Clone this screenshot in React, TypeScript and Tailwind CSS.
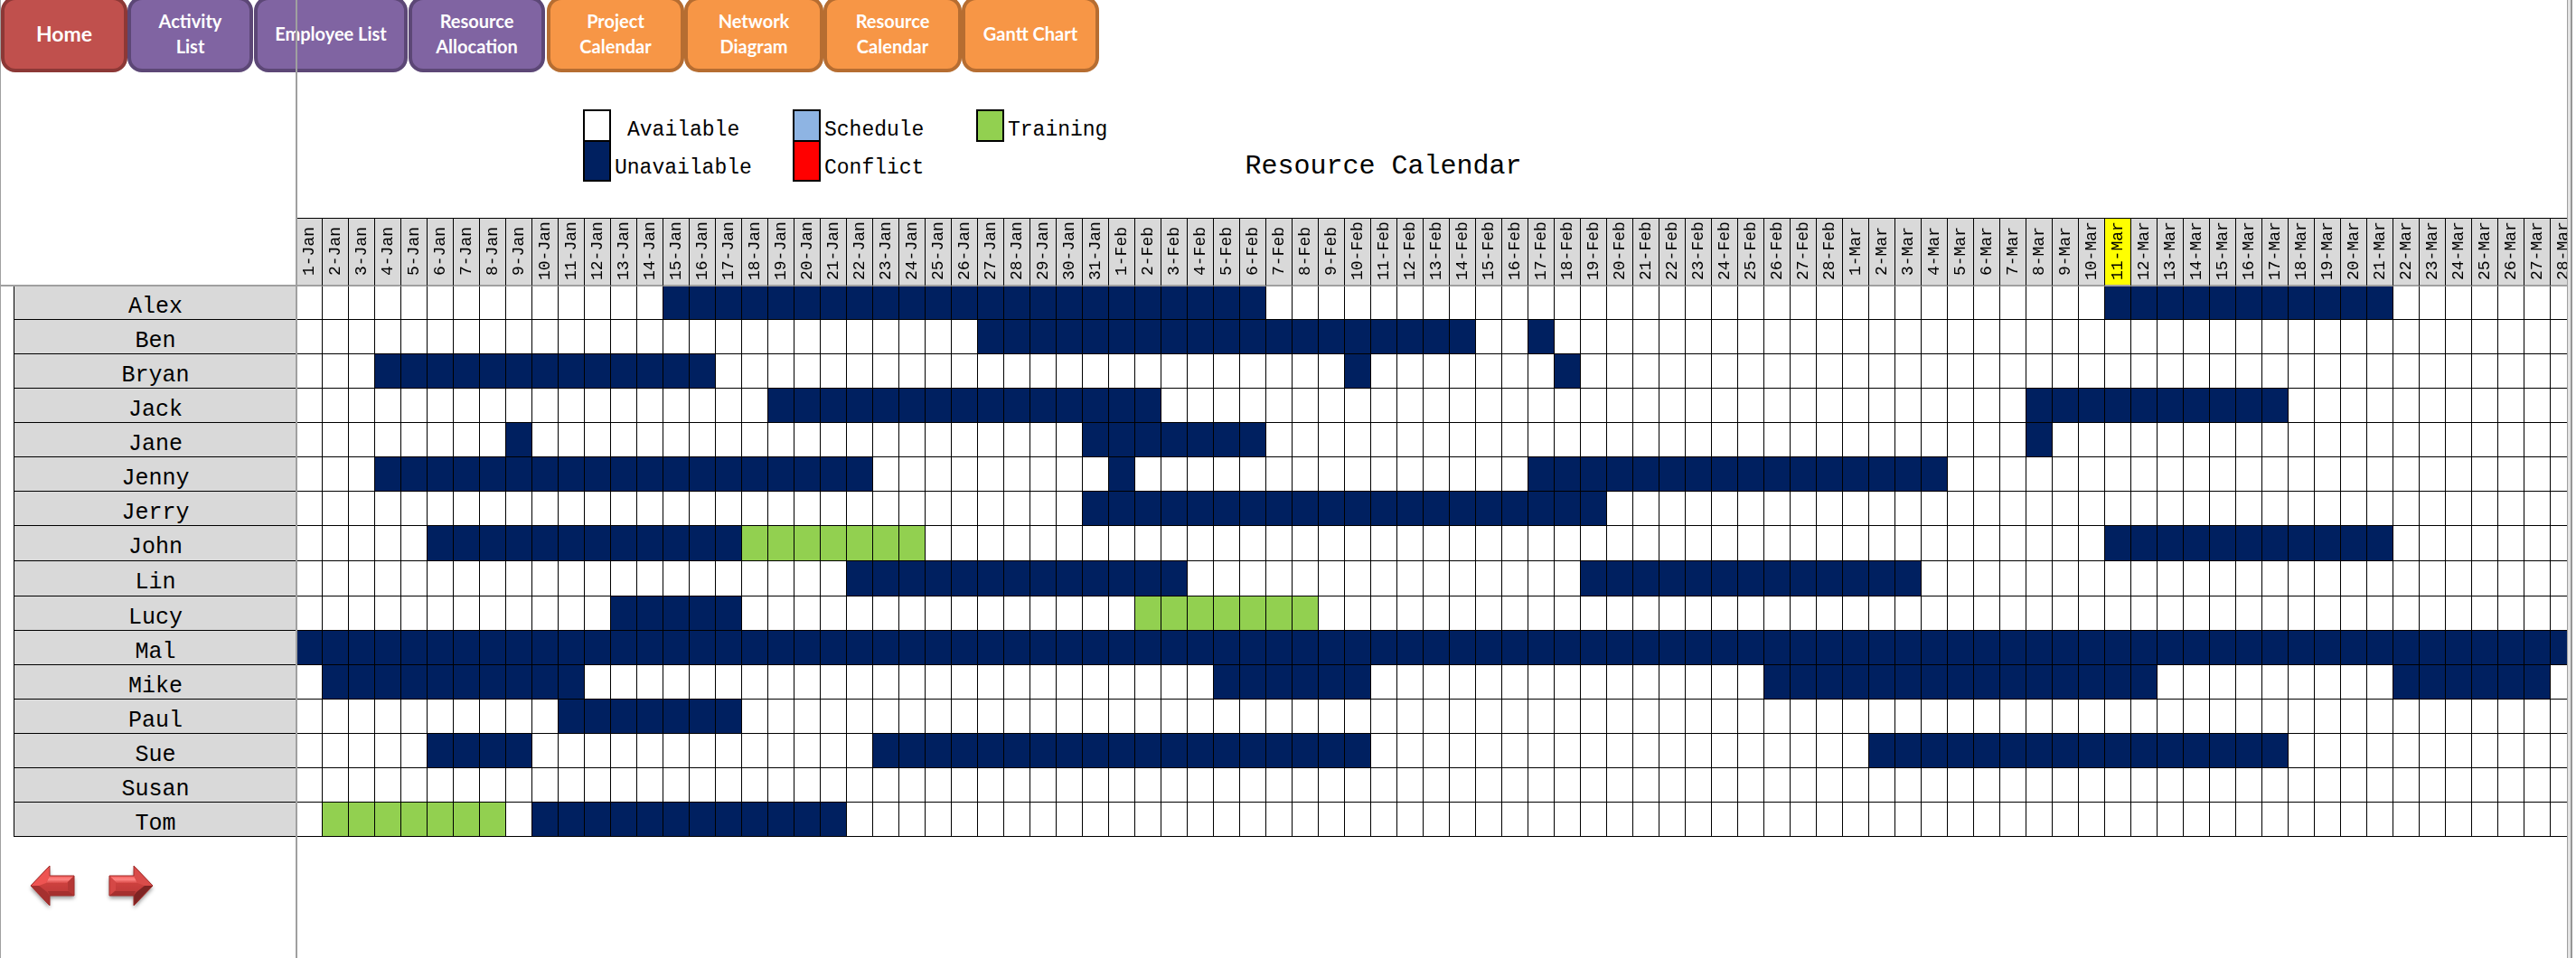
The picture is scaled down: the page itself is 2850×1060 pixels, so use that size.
const nav = [
  { label: ['Home'], w: 'w-[140px]', tone: 'bg-[#c0504d] border-[#8c3836]', size: 'text-[23px]' },
  { label: ['Activity', 'List'], w: 'w-[139px]', tone: 'bg-[#8064a2] border-[#5c4776]', size: 'text-[20px]' },
  { label: ['Employee List'], w: 'w-[170px] ml-px', tone: 'bg-[#8064a2] border-[#5c4776]', size: 'text-[20px]' },
  { label: ['Resource', 'Allocation'], w: 'w-[151px] ml-px', tone: 'bg-[#8064a2] border-[#5c4776]', size: 'text-[20px]' },
  { label: ['Project', 'Calendar'], w: 'w-[152px] ml-0.5', tone: 'bg-[#f79646] border-[#b66d31]', size: 'text-[20px]' },
  { label: ['Network', 'Diagram'], w: 'w-[154px]', tone: 'bg-[#f79646] border-[#b66d31]', size: 'text-[20px]' },
  { label: ['Resource', 'Calendar'], w: 'w-[153px]', tone: 'bg-[#f79646] border-[#b66d31]', size: 'text-[20px]' },
  { label: ['Gantt Chart'], w: 'w-[152px]', tone: 'bg-[#f79646] border-[#b66d31]', size: 'text-[20px]' },
];

const months: [string, number][] = [['Jan', 31], ['Feb', 28], ['Mar', 28]];
const days = months.flatMap(([m, n]) => Array.from({ length: n }, (_, i) => `${i + 1}-${m}`));
const today = '11-Mar';

type Span = [string, string, 'u' | 't'];
const people: { name: string; h?: string; spans: Span[] }[] = [
  { name: 'Alex', h: 'h-[37px]', spans: [['15-Jan', '6-Feb', 'u'], ['11-Mar', '21-Mar', 'u']] },
  { name: 'Ben', spans: [['27-Jan', '14-Feb', 'u'], ['17-Feb', '17-Feb', 'u']] },
  { name: 'Bryan', spans: [['4-Jan', '16-Jan', 'u'], ['10-Feb', '10-Feb', 'u'], ['18-Feb', '18-Feb', 'u']] },
  { name: 'Jack', spans: [['19-Jan', '2-Feb', 'u'], ['8-Mar', '17-Mar', 'u']] },
  { name: 'Jane', spans: [['9-Jan', '9-Jan', 'u'], ['31-Jan', '6-Feb', 'u'], ['8-Mar', '8-Mar', 'u']] },
  { name: 'Jenny', spans: [['4-Jan', '22-Jan', 'u'], ['1-Feb', '1-Feb', 'u'], ['17-Feb', '4-Mar', 'u']] },
  { name: 'Jerry', spans: [['31-Jan', '19-Feb', 'u']] },
  { name: 'John', h: 'h-[39px]', spans: [['6-Jan', '17-Jan', 'u'], ['18-Jan', '24-Jan', 't'], ['11-Mar', '21-Mar', 'u']] },
  { name: 'Lin', h: 'h-[39px]', spans: [['22-Jan', '3-Feb', 'u'], ['19-Feb', '3-Mar', 'u']] },
  { name: 'Lucy', spans: [['13-Jan', '17-Jan', 'u'], ['2-Feb', '8-Feb', 't']] },
  { name: 'Mal', spans: [['1-Jan', '28-Mar', 'u']] },
  { name: 'Mike', spans: [['2-Jan', '11-Jan', 'u'], ['5-Feb', '10-Feb', 'u'], ['26-Feb', '12-Mar', 'u'], ['22-Mar', '27-Mar', 'u']] },
  { name: 'Paul', spans: [['11-Jan', '17-Jan', 'u']] },
  { name: 'Sue', spans: [['6-Jan', '9-Jan', 'u'], ['23-Jan', '10-Feb', 'u'], ['2-Mar', '17-Mar', 'u']] },
  { name: 'Susan', spans: [] },
  { name: 'Tom', spans: [['2-Jan', '8-Jan', 't'], ['10-Jan', '21-Jan', 'u']] },
];

function tone(spans: Span[], i: number) {
  const hit = spans.find(([a, b]) => i >= days.indexOf(a) && i <= days.indexOf(b));
  if (!hit) return 'bg-white';
  return hit[2] === 'u' ? 'bg-[#002060]' : 'bg-[#92d050]';
}

function Swatch({ className }: { className: string }) {
  return <span className={`w-[31px] shrink-0 border-2 border-black ${className}`} />;
}

function Legend() {
  return (
    <div className="flex pt-[41px] pl-[316px] text-[23px] leading-[38px] font-medium text-black">
      <div className="w-[232px]">
        <div className="flex h-9"><Swatch className="h-9 bg-white" /><span className="pt-1 pl-[18px]">Available</span></div>
        <div className="flex h-11"><Swatch className="-mt-0.5 h-[46px] bg-[#002060]" /><span className="pt-2.5 pl-1">Unavailable</span></div>
      </div>
      <div className="w-[203px]">
        <div className="flex h-9"><Swatch className="h-9 bg-[#8eb4e3]" /><span className="pt-1 pl-1">Schedule</span></div>
        <div className="flex h-11"><Swatch className="-mt-0.5 h-[46px] bg-[#ff0000]" /><span className="pt-2.5 pl-1">Conflict</span></div>
      </div>
      <div className="flex h-9"><Swatch className="h-9 bg-[#92d050]" /><span className="pt-1 pl-1">Training</span></div>
    </div>
  );
}

function Arrow({ left, label }: { left?: boolean; label: string }) {
  const id = left ? 'l' : 'r';
  return (
    <button aria-label={label} className="h-[56px] w-[60px]">
      <svg viewBox="0 0 60 56" className="h-full w-full overflow-visible">
        <defs>
          <linearGradient id={`face-${id}`} x1="0" y1="0" x2="0" y2="1">
            <stop offset="0" stopColor="#e04b49" />
            <stop offset=".5" stopColor="#c93f3d" />
            <stop offset="1" stopColor="#b03432" />
          </linearGradient>
          <linearGradient id={`shine-${id}`} x1="0" y1="0" x2="0" y2="1">
            <stop offset="0" stopColor="#f05a58" />
            <stop offset=".5" stopColor="#ff8583" />
            <stop offset="1" stopColor="#d94a48" />
          </linearGradient>
          <filter id={`shade-${id}`} x="-30%" y="-30%" width="160%" height="170%">
            <feDropShadow dx="0" dy="3" stdDeviation="2" floodColor="#000" floodOpacity=".4" />
          </filter>
        </defs>
        <g transform={left ? 'matrix(-1 0 0 1 60 0)' : undefined}>
          <path d="M6 15H33V4L54 26L33 48V37H6Z" fill={`url(#face-${id})`} filter={`url(#shade-${id})`} />
          <path d="M6 15H33L37 23H14Z" fill={`url(#shine-${id})`} />
          <path d="M6 37H33L35 32H12Z" fill="#a5302f" />
          <path d="M6 15L13 22V31L6 37Z" fill={left ? '#b53735' : '#d54846'} />
          <path d="M33 4L54 26H45L37 23L33 15Z" fill={left ? '#ee5452' : '#d94c4a'} />
          <path d="M33 48L54 26H45L36 33L33 37Z" fill={left ? '#a5302f' : '#7e2423'} />
          <path d="M6 15H33V4L54 26L33 48V37H6Z" fill="none" stroke="#a02c2a" />
        </g>
      </svg>
    </button>
  );
}

export default function App() {
  return (
    <div className="relative flex min-h-screen w-full overflow-hidden border-l border-[#a0a0a0] bg-white font-['Liberation_Mono',monospace] text-black">
      <nav className="absolute top-0 left-0 flex items-end font-['Lato',sans-serif] font-bold text-white">
        {nav.map((n, i) => (
          <button
            key={i}
            className={`-mt-1 flex h-[84px] flex-col items-center justify-center rounded-[16px] border-4 pb-0.5 leading-7 whitespace-nowrap ${n.w} ${n.tone} ${n.size}`}
          >
            {n.label.map((l) => <span key={l}>{l}</span>)}
          </button>
        ))}
      </nav>
      <div className="pointer-events-none absolute inset-y-0 left-[326px] w-0.5 bg-[#a0a0a0]" />

      <main className="min-w-0 flex-1 overflow-hidden">
        <div className="flex h-[241px] pt-20 pl-[328px]">
          <Legend />
          <h1 className="pt-[84px] pl-[152px] text-[30px] leading-10">Resource Calendar</h1>
        </div>
        <table className="w-[2850px] table-fixed border-separate border-spacing-0">
          <colgroup>
            <col className="w-[15px]" />
            <col className="w-[312px]" />
            {days.map((d) => <col key={d} className="w-[29px]" />)}
          </colgroup>
          <thead>
            <tr className="h-[76px]">
              <td className="border-b-2 border-[#a0a0a0]" />
              <td className="border-b-2 border-[#a0a0a0]" />
              {days.map((d) => (
                <th
                  key={d}
                  scope="col"
                  className={`border-t border-r border-b-2 border-t-black border-r-black border-b-[#a0a0a0] p-0 text-[18px] font-normal ${d === today ? 'bg-[#ffff00]' : 'bg-[#d9d9d9]'}`}
                >
                  <div className="h-[73px] w-7 rotate-180 pt-0.5 leading-7 whitespace-nowrap [writing-mode:vertical-rl]">{d}</div>
                </th>
              ))}
            </tr>
          </thead>
          <tbody>
            {people.map((p) => (
              <tr key={p.name} className={p.h ?? 'h-[38px]'}>
                <td className="border-r border-black p-0" />
                <th scope="row" className="border-b border-black bg-[#d9d9d9] p-0 pt-2.5 text-[25px] leading-[26px] font-normal">{p.name}</th>
                {days.map((d, i) => <td key={d} className={`border-r border-b border-black p-0 ${tone(p.spans, i)}`} />)}
              </tr>
            ))}
          </tbody>
        </table>
        <div className="flex gap-[27px] pt-7 pl-[27px]">
          <Arrow left label="Previous" />
          <Arrow label="Next" />
        </div>
      </main>
      <div className="z-10 flex w-[10px] shrink-0 bg-white">
        <div className="w-1.5 border-r-2 border-l border-r-[#969696] border-l-[#a0a0a0] bg-[#e3e3e3]" />
      </div>
    </div>
  );
}
